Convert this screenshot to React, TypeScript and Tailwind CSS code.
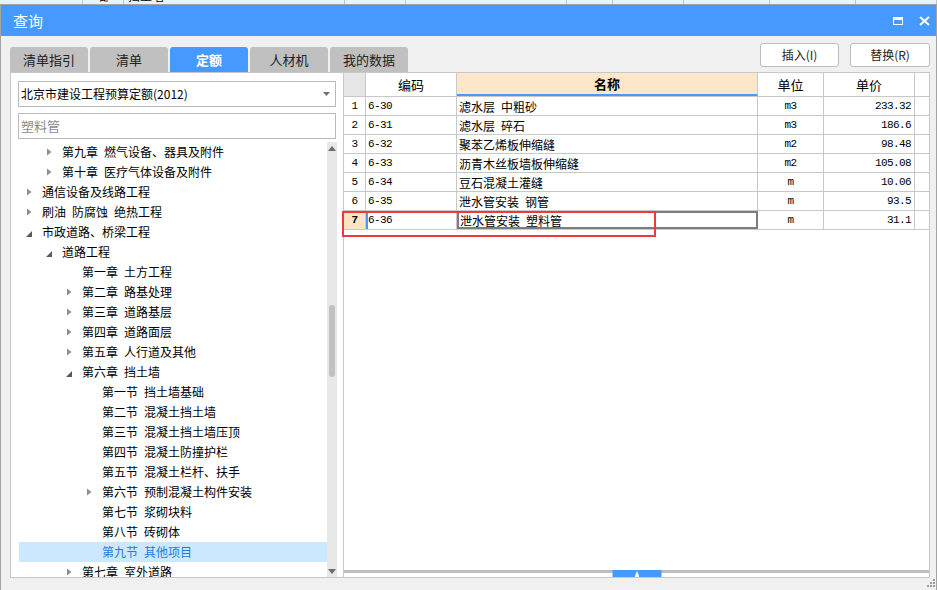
import React from "react"

const font = "font-['Noto_Sans_CJK_SC','Noto_Sans',sans-serif]"
const mono = "font-['Liberation_Mono','Noto_Sans_CJK_SC',monospace] text-[11px] tracking-[-0.6px]"

type Node = { l: number; a: "c" | "e" | ""; t: string; sel?: boolean }

const tree: Node[] = [
  { l: 2, a: "c", t: "第九章 燃气设备、器具及附件" },
  { l: 2, a: "c", t: "第十章 医疗气体设备及附件" },
  { l: 1, a: "c", t: "通信设备及线路工程" },
  { l: 1, a: "c", t: "刷油 防腐蚀 绝热工程" },
  { l: 1, a: "e", t: "市政道路、桥梁工程" },
  { l: 2, a: "e", t: "道路工程" },
  { l: 3, a: "", t: "第一章 土方工程" },
  { l: 3, a: "c", t: "第二章 路基处理" },
  { l: 3, a: "c", t: "第三章 道路基层" },
  { l: 3, a: "c", t: "第四章 道路面层" },
  { l: 3, a: "c", t: "第五章 人行道及其他" },
  { l: 3, a: "e", t: "第六章 挡土墙" },
  { l: 4, a: "", t: "第一节 挡土墙基础" },
  { l: 4, a: "", t: "第二节 混凝土挡土墙" },
  { l: 4, a: "", t: "第三节 混凝土挡土墙压顶" },
  { l: 4, a: "", t: "第四节 混凝土防撞护栏" },
  { l: 4, a: "", t: "第五节 混凝土栏杆、扶手" },
  { l: 4, a: "c", t: "第六节 预制混凝土构件安装" },
  { l: 4, a: "", t: "第七节 浆砌块料" },
  { l: 4, a: "", t: "第八节 砖砌体" },
  { l: 4, a: "", t: "第九节 其他项目", sel: true },
  { l: 3, a: "c", t: "第七章 室外道路" },
]

const indent: Record<number, string> = {
  1: "pl-[4px]",
  2: "pl-[24px]",
  3: "pl-[44px]",
  4: "pl-[64px]",
}

const rows = [
  ["6-30", "滤水层 中粗砂", "m3", "233.32"],
  ["6-31", "滤水层 碎石", "m3", "186.6"],
  ["6-32", "聚苯乙烯板伸缩缝", "m2", "98.48"],
  ["6-33", "沥青木丝板墙板伸缩缝", "m2", "105.08"],
  ["6-34", "豆石混凝土灌缝", "m", "10.06"],
  ["6-35", "泄水管安装 钢管", "m", "93.5"],
  ["6-36", "泄水管安装 塑料管", "m", "31.1"],
]

const bgCells = [83, 41, 221, 61, 161, 46, 71, 86, 86, 81]

function Spaced({ text }: { text: string }) {
  return (
    <span className="inline-flex gap-[6px] whitespace-nowrap">
      {text.split(" ").map((w, i) => (
        <span key={i}>{w}</span>
      ))}
    </span>
  )
}

function Arrow({ kind }: { kind: Node["a"] }) {
  if (kind === "c")
    return (
      <svg width="5" height="8" viewBox="0 0 5 8" className="ml-[4px]">
        <path d="M0 0.5 L4.5 4 L0 7.5Z" fill="#8e8e8e" />
      </svg>
    )
  if (kind === "e")
    return (
      <svg width="6" height="6" viewBox="0 0 6 6" className="ml-[3px] mt-[3px]">
        <path d="M6 0 L6 6 L0 6Z" fill="#5a5a5a" />
      </svg>
    )
  return null
}

export default function App() {
  return (
    <div className={`w-[937px] h-[590px] overflow-hidden bg-[#f0f0f0] text-black ${font} relative`}>
      {/* window behind the dialog */}
      <div className="h-[4px] flex bg-[#e8f4f9] overflow-hidden">
        {bgCells.map((w, i) => (
          <div key={i} style={{ width: w }} className="border-r border-[#c4c4c4] shrink-0 relative">
            {i === 1 && <span className="absolute left-[16px] -top-[11px] text-[12px] leading-[14px]">部</span>}
            {i === 2 && <span className="absolute left-[4px] -top-[11px] text-[12px] leading-[14px]">挡土墙</span>}
          </div>
        ))}
      </div>

      <div className="h-[586px] border-t border-x border-[#a3a3a3] flex flex-col">
        {/* title bar */}
        <div className="h-[31px] bg-[#4599ff] flex items-center justify-between pl-[12px] pr-[6px]">
          <span className="text-white text-[15px] leading-none">查询</span>
          <div className="flex items-center gap-[16px]">
            <div className="w-[10px] h-[8px] border-white border-x-[1.5px] border-b-[1.5px] border-t-[3px]" />
            <svg width="11" height="10" viewBox="0 0 11 10">
              <path d="M1 1 L10 9 M10 1 L1 9" stroke="white" strokeWidth="2" />
            </svg>
          </div>
        </div>

        {/* tabs + buttons */}
        <div className="h-[36px] flex justify-between pl-[9px] pr-[6px]">
          <div className="flex gap-[2px] items-end">
            {["清单指引", "清单", "定额", "人材机", "我的数据"].map((t) => (
              <div
                key={t}
                className={
                  t === "定额"
                    ? "w-[78px] h-[25px] rounded-t-[3px] bg-[#4599ff] text-white font-bold text-[13px] flex items-center justify-center"
                    : "w-[78px] h-[25px] rounded-t-[3px] bg-[#c0c0c0] text-[#222] text-[13px] flex items-center justify-center"
                }
              >
                {t}
              </div>
            ))}
          </div>
          <div className="flex gap-[11px] mt-[7px]">
            <button className="w-[79px] h-[24px] bg-white border border-[#bdbdbd] rounded-[3px] text-[12px] text-[#222]">
              插入(I)
            </button>
            <button className="w-[80px] h-[24px] bg-white border border-[#bdbdbd] rounded-[3px] text-[12px] text-[#222]">
              替换(R)
            </button>
          </div>
        </div>

        {/* panels */}
        <div className="h-[506px] flex pl-[9px] pr-[6px] relative">
          {/* left tree panel */}
          <div className="w-[334px] bg-white border border-[#c8c8c8] flex flex-col">
            <div className="ml-[7px] mt-[8px] w-[318px] h-[26px] border border-[#b9b9b9] flex items-center justify-between pl-[2px] pr-[5px]">
              <span className="text-[12px]">北京市建设工程预算定额(2012)</span>
              <svg width="7" height="4" viewBox="0 0 7 4">
                <path d="M0 0 L7 0 L3.5 4Z" fill="#707070" />
              </svg>
            </div>
            <div className="ml-[7px] mt-[6px] w-[318px] h-[26px] border border-[#b9b9b9] flex items-center pl-[2px]">
              <span className="text-[13px] text-[#8a8a8a]">塑料管</span>
            </div>
            <div className="ml-[8px] mt-[3px] w-[318px] flex-1 flex overflow-hidden">
              <div className="flex-1 overflow-hidden">
                {tree.map((n, i) => (
                  <div
                    key={i}
                    className={`h-[20px] flex items-center ${indent[n.l]} ${n.sel ? "bg-[#cce8ff] text-[#1f7ae0]" : ""}`}
                  >
                    <div className="w-[19px] h-[20px] flex items-center shrink-0">
                      <Arrow kind={n.a} />
                    </div>
                    <span className="text-[12px] leading-[20px]">
                      <Spaced text={n.t} />
                    </span>
                  </div>
                ))}
              </div>
              <div className="w-[10px] bg-[#e8e8e8] flex flex-col items-center">
                <svg width="8" height="5" viewBox="0 0 8 5" className="mt-[4px]">
                  <path d="M0 5 L8 5 L4 0Z" fill="#6c6c6c" />
                </svg>
                <div className="w-[6px] h-[72px] mt-[154px] rounded-[3px] bg-[#c1c1c1]" />
                <div className="flex-1" />
                <svg width="8" height="5" viewBox="0 0 8 5" className="mb-[3px]">
                  <path d="M0 0 L8 0 L4 5Z" fill="#6c6c6c" />
                </svg>
              </div>
            </div>
          </div>

          {/* right table panel */}
          <div className="flex-1 bg-white border-y border-r border-[#c8c8c8] flex flex-col">
            <div className="flex h-[24px] border-b border-[#c8c8c8] text-[13px]">
              <div className="w-[22px] bg-[#e6e6e6] border-r border-[#c8c8c8]" />
              <div className="w-[91px] border-r border-[#c8c8c8] flex items-center justify-center">编码</div>
              <div className="w-[301px] border-r border-[#c8c8c8] bg-[#fde6c9] border-b-2 border-b-[#4599ff] flex items-center justify-center font-bold">
                名称
              </div>
              <div className="w-[66px] border-r border-[#c8c8c8] flex items-center justify-center">单位</div>
              <div className="w-[91px] border-r border-[#c8c8c8] flex items-center justify-center">单价</div>
            </div>
            {rows.map((r, i) => {
              const last = i === rows.length - 1
              return (
                <div key={i} className="flex h-[19px] border-b border-[#c8c8c8] text-[12px]">
                  <div
                    className={`w-[22px] border-r border-[#c8c8c8] flex items-center justify-center pt-[1px] ${mono} ${
                      last ? "bg-[#fde4c4] font-bold" : ""
                    }`}
                  >
                    {i + 1}
                  </div>
                  <div
                    className={`w-[91px] border-r border-[#c8c8c8] flex items-center pt-[1px] ${mono} ${
                      last ? "border-l-2 border-l-[#4599ff] pl-0" : "pl-[2px]"
                    }`}
                  >
                    {r[0]}
                  </div>
                  <div
                    className={`w-[301px] flex items-center pt-[1px] ${
                      last ? "border-2 border-[#7d7d7d] pl-[1px]" : "border-r border-[#c8c8c8] pl-[2px]"
                    }`}
                  >
                    <Spaced text={r[1]} />
                  </div>
                  <div className={`w-[66px] border-r border-[#c8c8c8] flex items-center justify-center pt-[1px] ${mono}`}>
                    {r[2]}
                  </div>
                  <div
                    className={`w-[91px] border-r border-[#c8c8c8] flex items-center justify-end pr-[3px] pt-[1px] ${mono}`}
                  >
                    {r[3]}
                  </div>
                </div>
              )
            })}
            <div className="flex-1" />
            <div className="h-[7px] relative">
              <div className="h-[3px] bg-[#bdbdbd]" />
              <div className="absolute left-1/2 -translate-x-1/2 top-0 w-[49px] h-[7px] bg-[#4599ff] flex items-center justify-center">
                <svg width="5" height="6" viewBox="0 0 5 6">
                  <path d="M0 6 L5 6 L2.5 0Z" fill="white" />
                </svg>
              </div>
            </div>
          </div>

          {/* red annotation box */}
          <div className="absolute left-[341px] top-[139px] w-[314px] h-[26px] border-2 border-[#ee3a3a]" />
        </div>
        <div className="flex-1 relative">
          <svg width="8" height="8" viewBox="0 0 8 8" className="absolute right-[1px] bottom-[3px]">
            <rect x="6" y="0" width="2" height="2" fill="#9a9a9a" />
            <rect x="3" y="3" width="2" height="2" fill="#9a9a9a" />
            <rect x="6" y="3" width="2" height="2" fill="#9a9a9a" />
            <rect x="0" y="6" width="2" height="2" fill="#9a9a9a" />
            <rect x="3" y="6" width="2" height="2" fill="#9a9a9a" />
            <rect x="6" y="6" width="2" height="2" fill="#9a9a9a" />
          </svg>
        </div>
      </div>
    </div>
  )
}
